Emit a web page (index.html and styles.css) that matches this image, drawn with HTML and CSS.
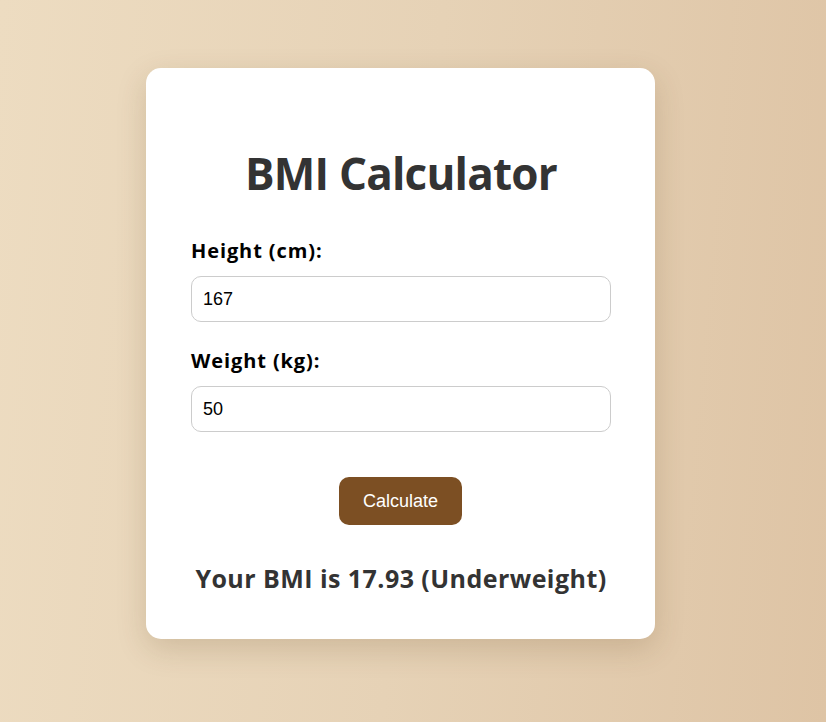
FILE: index.html
```html
<!DOCTYPE html>
<html lang="en">
<head>
<meta charset="utf-8">
<title>BMI Calculator</title>
<link rel="stylesheet" href="styles.css">
</head>
<body>
<main class="page">
  <section class="card">
    <h1 class="title">BMI Calculator</h1>
    <form class="form">
      <label class="label" for="height">Height (cm):</label>
      <input class="field" id="height" type="text" value="167">
      <label class="label" for="weight">Weight (kg):</label>
      <input class="field" id="weight" type="text" value="50">
      <button class="btn" type="button">Calculate</button>
    </form>
    <p class="result">Your BMI is 17.93 (Underweight)</p>
  </section>
</main>
</body>
</html>
```
FILE: styles.css
```css
* { box-sizing: border-box; }
html, body { margin: 0; height: 100%; }
body {
  background: linear-gradient(95deg, #eddcc1 0%, #e6d2b6 50%, #dec4a5 100%);
  font-family: "Open Sans", "Noto Sans", sans-serif;
}
.page {
  min-height: 100%;
  display: flex;
  align-items: flex-start;
  padding: 68px 0 0 146px;
}
.card {
  width: 509px;
  height: 571px;
  background: #fff;
  border-radius: 15px;
  box-shadow: 0 10px 30px rgba(90, 60, 20, 0.18);
  padding: 0 44px 0 45px;
  display: flex;
  flex-direction: column;
}
.title {
  margin: 75px 0 0;
  text-align: center;
  font-size: 44px;
  line-height: 60px;
  letter-spacing: -0.8px;
  font-weight: 700;
  color: #333;
}
.form {
  display: flex;
  flex-direction: column;
  margin-top: 35px;
}
.label {
  font-size: 20px;
  font-weight: 700;
  letter-spacing: 0.9px;
  color: #000;
  line-height: 26px;
  margin-bottom: 12px;
}
.field {
  width: 420px;
  height: 46px;
  border: 1px solid #ccc;
  border-radius: 10px;
  padding: 0 11px;
  font-family: "Liberation Sans", Arial, sans-serif;
  font-size: 18px;
  color: #000;
  margin-bottom: 26px;
  outline: none;
}
.btn {
  align-self: center;
  margin: 19px 0 0 -1px;
  width: 123px;
  height: 48px;
  border: 0;
  border-radius: 10px;
  background: #7c4f23;
  color: #fff;
  font-family: "Liberation Sans", Arial, sans-serif;
  font-size: 18px;
}
.result {
  margin: 36px 0 0;
  text-align: center;
  font-size: 25px;
  line-height: 34px;
  letter-spacing: 0.45px;
  font-weight: 700;
  color: #333;
}
```
